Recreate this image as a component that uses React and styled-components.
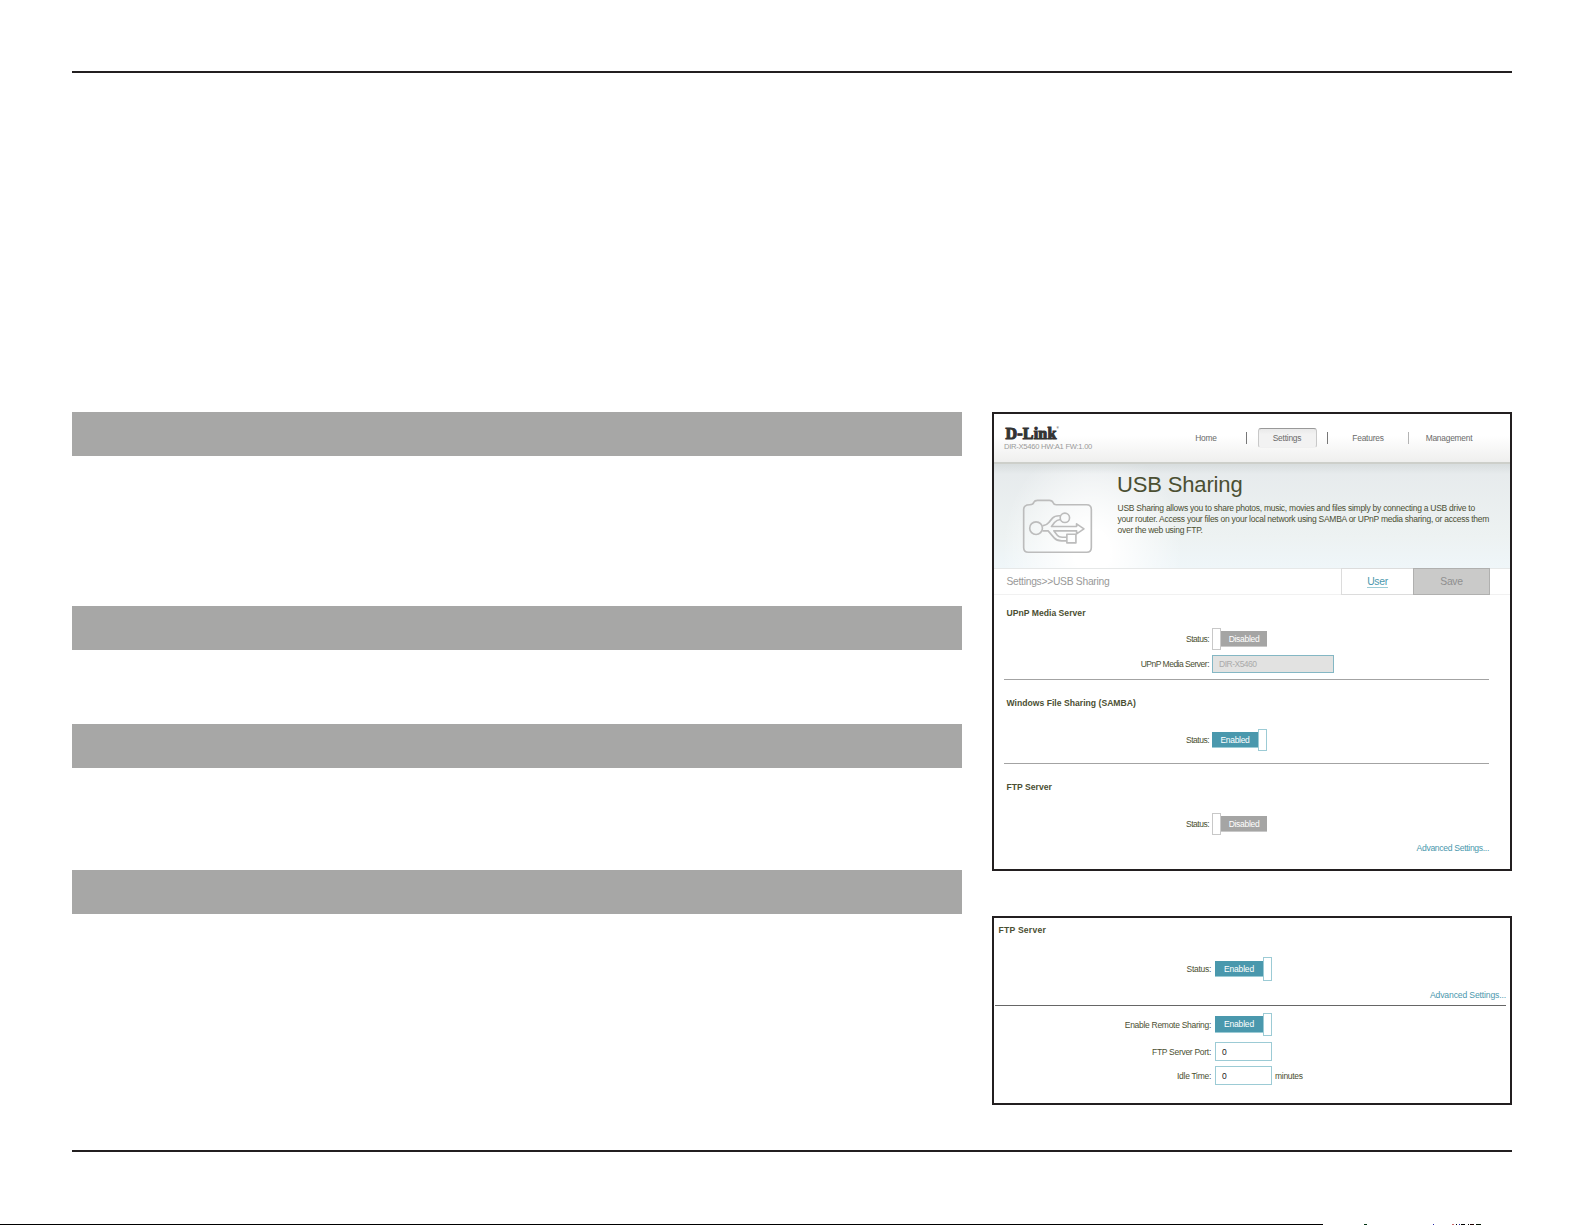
import React from 'react';
import styled, { createGlobalStyle, css } from 'styled-components';

const colors = {
  ink: '#231f20',
  olive: '#4b4f32',
  teal: '#4a98ad',
  tealLight: '#9ccbd5',
  grey: '#a5a5a4',
  greyLight: '#c8c8c8',
  bar: '#a7a7a6',
};

const GlobalStyle = createGlobalStyle`
  * {
    box-sizing: border-box;
  }

  body {
    margin: 0;
    background: #fff;
    font-family: 'Liberation Sans', Arial, sans-serif;
    overflow: hidden;
  }
`;

const Page = styled.div`
  width: 1585px;
  height: 1225px;
  display: flex;
  flex-direction: column;
  padding-top: 71px;
`;

const Rule = styled.div`
  flex: none;
  height: 2px;
  margin: 0 73px 0 72px;
  background: ${colors.ink};
`;

const Columns = styled.main`
  display: grid;
  grid-template-columns: 890px 520px;
  column-gap: 30px;
  height: 1077px;
  padding: 339px 73px 0 72px;
`;

const Column = styled.div`
  display: flex;
  flex-direction: column;
`;

const Bar = styled.div`
  height: 44px;
  margin-bottom: ${(p) => p.$gap || 0}px;
  background: ${colors.bar};
`;

const Panel = styled.section`
  display: flex;
  flex-direction: column;
  flex: none;
  height: ${(p) => p.$height}px;
  margin-bottom: 45px;
  border: 2px solid ${colors.ink};
  background: #fff;
`;

const Header = styled.header`
  display: flex;
  flex: none;
  height: 50px;
  border-bottom: 2px solid #cdcfca;
  background: linear-gradient(#fff 45%, #efefee);
`;

const Brand = styled.div`
  width: 172px;
  padding: 12px 0 0 10px;
  white-space: nowrap;
`;

const Logo = styled.div`
  display: flex;
  height: 15px;
  padding-left: 1.5px;
  font: bold 16px/15px 'Liberation Serif', serif;
  letter-spacing: 0.2px;
  color: #333;
  -webkit-text-stroke: 1.1px #333;

  & sup {
    font-size: 3px;
    line-height: 5px;
    -webkit-text-stroke: 0;
  }
`;

const Model = styled.div`
  font-size: 7.6px;
  line-height: 9px;
  letter-spacing: -0.27px;
  margin-top: 1px;
  color: #999;
`;

const Nav = styled.nav`
  display: flex;
  align-items: flex-start;
  padding-top: 14px;
`;

const NavItem = styled.div`
  display: flex;
  justify-content: center;
  width: 80px;
`;

const NavLabel = styled.span`
  width: 59px;
  height: 20px;
  border: 1px solid transparent;
  border-radius: 3px;
  text-align: center;
  font-size: 8.4px;
  line-height: 18px;
  letter-spacing: -0.22px;
  color: #6a6a6a;

  ${(p) =>
    p.$active &&
    css`
      background: linear-gradient(#e9e9e9, #f2f2f2 30%);
      border-color: #999 #c8c8c8 #f0f0f0;
    `}
`;

const Divider = styled.span`
  width: 1px;
  height: 12px;
  margin-top: 4px;
  background: ${(p) => p.$color};
`;

const Hero = styled.div`
  display: flex;
  flex: none;
  height: 104px;
  background:
    linear-gradient(rgba(205, 211, 211, 0.55), rgba(226, 231, 233, 0) 10px),
    radial-gradient(ellipse 90px 110px at 98px 88px, #fff 20%, rgba(255, 255, 255, 0)),
    linear-gradient(#e6eaec, #edf2f2 70%, #eff6f9);
`;

const FolderIcon = styled.svg`
  flex: none;
  width: 71px;
  height: 55px;
  margin: 35px 25px 0 27.5px;
  fill: none;
  stroke: #bcbcbc;
  stroke-width: 4.9;
  stroke-linejoin: round;
`;

const Title = styled.h1`
  margin: 8px 0 0 -0.5px;
  font-size: 22px;
  line-height: 26px;
  letter-spacing: -0.15px;
  font-weight: normal;
  color: ${colors.olive};
`;

const Intro = styled.p`
  margin: 4.6px 0 0;
  font-size: 8.5px;
  line-height: 11.25px;
  letter-spacing: -0.26px;
  white-space: nowrap;
  color: ${colors.olive};
`;

const Toolbar = styled.div`
  display: flex;
  flex: none;
  height: 27px;
  padding-right: 20px;
  border-top: 1px solid #e6e8e8;
  border-bottom: 1px solid #f1f1f1;
`;

const Breadcrumb = styled.div`
  flex: 1;
  padding-left: 12.5px;
  font-size: 10.3px;
  line-height: 25px;
  letter-spacing: -0.28px;
  color: #999;
`;

const Tab = styled.div`
  width: ${(p) => p.$width}px;
  height: 27px;
  margin-top: -1px;
  border: 1px solid ${(p) => (p.$disabled ? '#b0b0af' : '#dcdcdc')};
  border-right-width: ${(p) => (p.$disabled ? 1 : 0)}px;
  background: ${(p) => (p.$disabled ? '#cacac9' : '#fff')};
  color: ${(p) => (p.$disabled ? '#8f8f8f' : colors.teal)};
  font-size: 10.4px;
  line-height: 26px;
  letter-spacing: -0.35px;
  text-align: center;

  & span {
    display: inline-block;
    height: 19px;
    border-bottom: ${(p) => (p.$disabled ? 'none' : `1px solid ${colors.tealLight}`)};
  }
`;

const Heading = styled.h2`
  flex: none;
  height: 12px;
  margin: ${(p) => p.$top}px 0 0 ${(p) => p.$left || 12.5}px;
  font-size: 8.6px;
  line-height: 12px;
  letter-spacing: ${(p) => (p.$wide ? 0.23 : 0.02)}px;
  color: ${colors.olive};
`;

const Row = styled.div`
  display: flex;
  flex: none;
  align-items: center;
  height: ${(p) => p.$height}px;
  margin-top: ${(p) => p.$top}px;
  color: ${colors.olive};
  font-size: 8.5px;
  letter-spacing: ${(p) => (p.$wide ? -0.29 : -0.5)}px;
`;

const Label = styled.label`
  width: ${(p) => p.$width || 215}px;
  margin-right: ${(p) => p.$gap || 3}px;
  line-height: 10px;
  text-align: right;
`;

const Switch = styled.div`
  display: flex;
  flex-direction: ${(p) => (p.$on ? 'row' : 'row-reverse')};
  justify-content: flex-end;
  align-items: center;
  width: ${(p) => p.$width || 55}px;
  height: 100%;

  & span {
    flex: 1;
    height: ${(p) => p.$body || 16}px;
    border-bottom: 1px solid ${(p) => (p.$on ? colors.tealLight : colors.greyLight)};
    background: ${(p) => (p.$on ? colors.teal : colors.grey)};
    color: #fff;
    line-height: ${(p) => p.$body || 16}px;
    letter-spacing: ${(p) => (p.$width ? -0.17 : -0.3)}px;
    text-align: center;
  }

  & i {
    width: 9px;
    height: 100%;
    border: 1px solid ${(p) => (p.$on ? colors.tealLight : colors.greyLight)};
    background: #fff;
  }
`;

const Field = styled.div`
  width: ${(p) => p.$width}px;
  height: 100%;
  padding-left: 6px;
  border: 1px solid ${(p) => (p.$disabled ? '#84b7c4' : colors.tealLight)};
  background: ${(p) => (p.$disabled ? '#e2e2e1' : '#fff')};
  color: ${(p) => (p.$disabled ? '#aaa' : '#222')};
  line-height: ${(p) => (p.$disabled ? 16 : 18)}px;
`;

const Unit = styled.span`
  margin-left: 3px;
  line-height: 10px;
`;

const Line = styled.div`
  flex: none;
  height: 1px;
  margin: ${(p) => p.$top}px ${(p) => (p.$dark ? '4px 0 1px' : '21px 0 10px')};
  background: ${(p) => (p.$dark ? '#666' : '#a3a3a3')};
`;

const Advanced = styled.a`
  flex: none;
  height: 12px;
  margin: ${(p) => p.$top}px ${(p) => p.$right}px 0 0;
  text-align: right;
  font-size: 8.6px;
  line-height: 12px;
  letter-spacing: ${(p) => p.$spacing}px;
  color: ${colors.teal};
`;

const Footer = styled.footer`
  display: flex;
  height: 1px;
  margin-top: 72px;
`;

const Mark = styled.span`
  width: ${(p) => p.$width}px;
  margin-left: ${(p) => p.$left || 0}px;
  background: ${(p) => p.$color || '#000'};
`;

function Toggle({ on, ...rest }) {
  return (
    <Switch $on={on} {...rest}>
      <span>{on ? 'Enabled' : 'Disabled'}</span>
      <i />
    </Switch>
  );
}

function UsbFolder() {
  return (
    <FolderIcon viewBox='110 282 212 164'>
      <path d='M133 299Q144 299 145 292Q148 286 156 286H192Q200 286 203 293Q205 299 212 299H303Q317 299 317 313V427Q317 441 303 441H129Q115 441 115 427V313Q115 299 133 299Z' />
      <circle cx='152' cy='369' r='19' />
      <circle cx='238' cy='338' r='14' />
      <path d='M171 362Q184 360 191 351L201 339Q208 331 224 332M225 343Q214 344 207 352L198 364H273V356L295 371L273 386V377H205L216 391Q220 396 230 396H244M171 377H188L206 398Q214 407 228 407H244' />
      <path d='M244 387H271V413H244Z' />
    </FolderIcon>
  );
}

export default function App() {
  return (
    <>
      <GlobalStyle />
      <Page>
        <Rule />
        <Columns>
          <Column>
            <Bar $gap={150} />
            <Bar $gap={74} />
            <Bar $gap={102} />
            <Bar />
          </Column>
          <Column>
            <Panel $height={459}>
              <Header>
                <Brand>
                  <Logo>
                    D-Link<sup>®</sup>
                  </Logo>
                  <Model>DIR-X5460 HW:A1 FW:1.00</Model>
                </Brand>
                <Nav>
                  <NavItem>
                    <NavLabel>Home</NavLabel>
                  </NavItem>
                  <Divider $color='#777' />
                  <NavItem>
                    <NavLabel $active>Settings</NavLabel>
                  </NavItem>
                  <Divider $color='#777' />
                  <NavItem>
                    <NavLabel>Features</NavLabel>
                  </NavItem>
                  <Divider $color='#b4b4b4' />
                  <NavItem>
                    <NavLabel>Management</NavLabel>
                  </NavItem>
                </Nav>
              </Header>
              <Hero>
                <UsbFolder />
                <div>
                  <Title>USB Sharing</Title>
                  <Intro>
                    USB Sharing allows you to share photos, music, movies and files simply by connecting a USB drive to
                    <br />
                    your router. Access your files on your local network using SAMBA or UPnP media sharing, or access them
                    <br />
                    over the web using FTP.
                  </Intro>
                </div>
              </Hero>
              <Toolbar>
                <Breadcrumb>Settings&gt;&gt;USB Sharing</Breadcrumb>
                <Tab $width={72}>
                  <span>User</span>
                </Tab>
                <Tab $width={77} $disabled>
                  <span>Save</span>
                </Tab>
              </Toolbar>

              <Heading $top={12}>UPnP Media Server</Heading>
              <Row $top={9} $height={22}>
                <Label>Status:</Label>
                <Toggle />
              </Row>
              <Row $top={5} $height={18}>
                <Label>UPnP Media Server:</Label>
                <Field $width={122} $disabled>
                  DIR-X5460
                </Field>
              </Row>
              <Line $top={6} />

              <Heading $top={17}>Windows File Sharing (SAMBA)</Heading>
              <Row $top={20} $height={22}>
                <Label>Status:</Label>
                <Toggle on />
              </Row>
              <Line $top={12} />

              <Heading $top={17}>FTP Server</Heading>
              <Row $top={20} $height={22}>
                <Label>Status:</Label>
                <Toggle />
              </Row>
              <Advanced $top={7} $right={21} $spacing={-0.32}>
                Advanced Settings...
              </Advanced>
            </Panel>

            <Panel $height={189}>
              <Heading $top={6} $left={4.5} $wide>
                FTP Server
              </Heading>
              <Row $top={21} $height={24} $wide>
                <Label $width={217} $gap={4}>
                  Status:
                </Label>
                <Toggle on $width={57} />
              </Row>
              <Advanced $top={8} $right={4} $spacing={-0.14}>
                Advanced Settings...
              </Advanced>
              <Line $top={4} $dark />
              <Row $top={7} $height={23} $wide>
                <Label $width={217} $gap={4}>
                  Enable Remote Sharing:
                </Label>
                <Toggle on $width={57} $body={17} />
              </Row>
              <Row $top={6} $height={19} $wide>
                <Label $width={217} $gap={4}>
                  FTP Server Port:
                </Label>
                <Field $width={57}>0</Field>
              </Row>
              <Row $top={5} $height={19} $wide>
                <Label $width={217} $gap={4}>
                  Idle Time:
                </Label>
                <Field $width={57}>0</Field>
                <Unit>minutes</Unit>
              </Row>
            </Panel>
          </Column>
        </Columns>
        <Rule />
        <Footer>
          <Mark $width={1323} />
          <Mark $width={3} $left={41} $color='#031' />
          <Mark $width={1} $left={66} $color='#22a' />
          <Mark $width={2} $left={18} $color='#c66' />
          <Mark $width={1} $left={2} />
          <Mark $width={1} $left={2} $color='#22a' />
          <Mark $width={4} $left={1} />
          <Mark $width={1} $left={3} />
          <Mark $width={4} $left={1} $color='#200' />
          <Mark $width={5} $left={2} $color='#010' />
        </Footer>
      </Page>
    </>
  );
}
